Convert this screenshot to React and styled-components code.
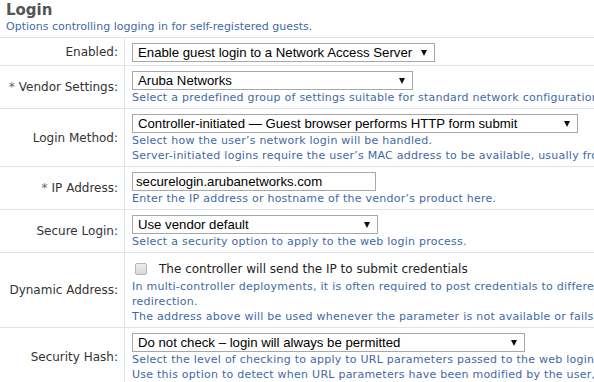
import React from "react";
import styled, { createGlobalStyle } from "styled-components";

const rows = [
  {
    label: "Enabled:",
    kind: "select",
    value: "Enable guest login to a Network Access Server",
    width: 303,
    help: [],
  },
  {
    label: "Vendor Settings:",
    required: true,
    kind: "select",
    value: "Aruba Networks",
    width: 281,
    help: [
      "Select a predefined group of settings suitable for standard network configurations.",
    ],
  },
  {
    label: "Login Method:",
    kind: "select",
    value: "Controller-initiated \u2014 Guest browser performs HTTP form submit",
    width: 446,
    help: [
      "Select how the user\u2019s network login will be handled.",
      "Server-initiated logins require the user\u2019s MAC address to be available, usually from the captive portal redirection.",
    ],
  },
  {
    label: "IP Address:",
    required: true,
    kind: "input",
    value: "securelogin.arubanetworks.com",
    width: 244,
    help: ["Enter the IP address or hostname of the vendor\u2019s product here."],
  },
  {
    label: "Secure Login:",
    kind: "select",
    value: "Use vendor default",
    width: 246,
    help: ["Select a security option to apply to the web login process."],
  },
  {
    label: "Dynamic Address:",
    kind: "checkbox",
    value: "The controller will send the IP to submit credentials",
    help: [
      "In multi-controller deployments, it is often required to post credentials to different addresses made available as part of the original",
      "redirection.",
      "The address above will be used whenever the parameter is not available or fails the requirements.",
    ],
  },
  {
    label: "Security Hash:",
    kind: "select",
    value: "Do not check \u2013 login will always be permitted",
    width: 393,
    help: [
      "Select the level of checking to apply to URL parameters passed to the web login page.",
      "Use this option to detect when URL parameters have been modified by the user, for example their MAC address.",
    ],
  },
];

const GlobalStyle = createGlobalStyle`
  html, body {
    margin: 0;
    padding: 0;
    background: #fff;
    overflow: hidden;
  }
  body {
    font-family: "DejaVu Sans", Verdana, sans-serif;
    color: #333;
  }
`;

const Page = styled.div`
  width: 594px;
  height: 382px;
  overflow: hidden;
`;

const Header = styled.div`
  padding: 1px 6px 3px;
  border-bottom: 1px solid #dde4ec;
`;

const Title = styled.h2`
  margin: 0;
  font-size: 15px;
  line-height: 19px;
  font-weight: bold;
  color: #555;
`;

const Subtitle = styled.div`
  font-size: 11px;
  line-height: 14px;
  color: #3f69a6;
  white-space: nowrap;
`;

const Row = styled.div`
  display: grid;
  grid-template-columns: 125px minmax(0, 1fr);
  border-bottom: 1px solid #dde4ec;
`;

const Label = styled.div`
  display: flex;
  align-items: center;
  justify-content: flex-end;
  padding-right: 6px;
  border-right: 1px solid #dde4ec;
  font-size: 12px;
  color: #333;
  white-space: nowrap;
`;

const Star = styled.span`
  color: #666;
  margin-right: 4px;
`;

const Field = styled.div`
  padding: 5px 0 3px 7px;
  overflow: hidden;
`;

const Select = styled.div`
  box-sizing: border-box;
  width: ${(p) => p.$width}px;
  height: 19px;
  display: flex;
  align-items: center;
  justify-content: space-between;
  padding: 0 7px 0 5px;
  border: 1px solid #a8a8a8;
  background: #fff;
  font-family: "Liberation Sans", Arial, sans-serif;
  font-size: 13.2px;
  color: #000;
  white-space: nowrap;
`;

const Arrow = styled.span`
  width: 0;
  height: 0;
  border-left: 3.5px solid transparent;
  border-right: 3.5px solid transparent;
  border-top: 6px solid #111;
`;

const TextBox = styled.div`
  box-sizing: border-box;
  width: ${(p) => p.$width}px;
  height: 19px;
  display: flex;
  align-items: center;
  padding: 0 3px;
  border: 1px solid #a8a8a8;
  background: #fff;
  font-family: "Liberation Sans", Arial, sans-serif;
  font-size: 13.2px;
  color: #000;
  white-space: nowrap;
`;

const CheckLine = styled.label`
  display: flex;
  align-items: center;
  height: 21px;
  font-size: 12px;
  color: #222;
  white-space: nowrap;
`;

const Box = styled.span`
  box-sizing: border-box;
  width: 12px;
  height: 12px;
  margin: 0 12px 0 3px;
  border: 1px solid #b5b5b5;
  border-radius: 2px;
  background: linear-gradient(#ededed, #d8d8d8);
`;

const Help = styled.div`
  font-size: 11px;
  line-height: 15px;
  letter-spacing: 0.25px;
  color: #3f69a6;
  white-space: nowrap;
`;

const Control = ({ row }) => {
  if (row.kind === "input") {
    return <TextBox $width={row.width}>{row.value}</TextBox>;
  }
  if (row.kind === "checkbox") {
    return (
      <CheckLine>
        <Box />
        {row.value}
      </CheckLine>
    );
  }
  return (
    <Select $width={row.width}>
      <span>{row.value}</span>
      <Arrow />
    </Select>
  );
};

export default function App() {
  return (
    <Page>
      <GlobalStyle />
      <Header>
        <Title>Login</Title>
        <Subtitle>Options controlling logging in for self-registered guests.</Subtitle>
      </Header>
      {rows.map((row) => (
        <Row key={row.label}>
          <Label>
            {row.required && <Star>*</Star>}
            {row.label}
          </Label>
          <Field>
            <Control row={row} />
            {row.help.map((line) => (
              <Help key={line}>{line}</Help>
            ))}
          </Field>
        </Row>
      ))}
    </Page>
  );
}
